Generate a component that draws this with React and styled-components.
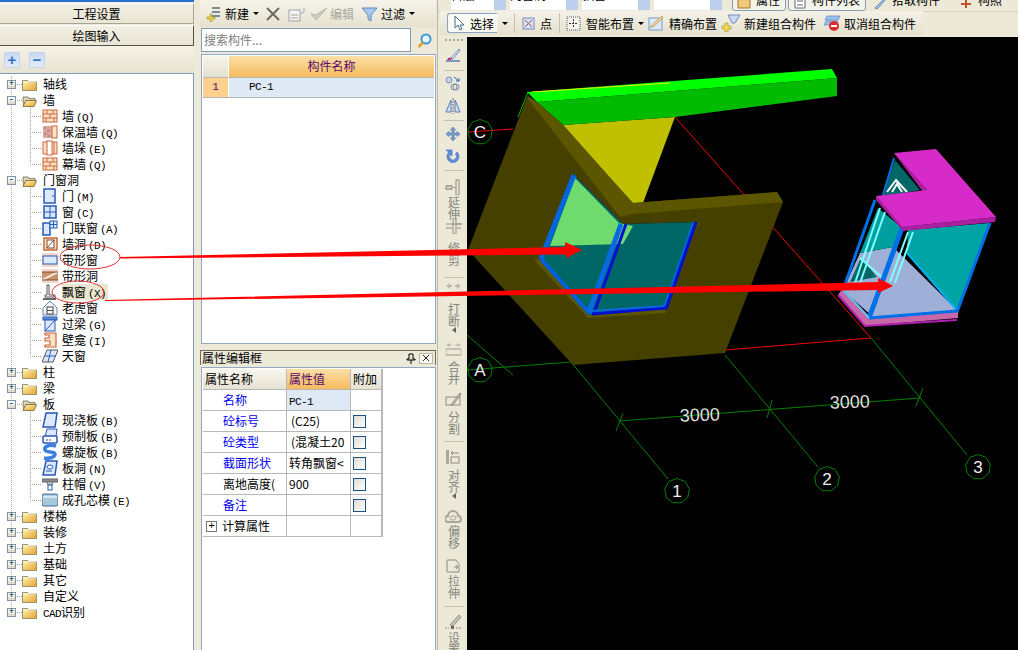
import React from 'react';
import styled, { createGlobalStyle } from 'styled-components';

const CJK = '"Noto Sans CJK SC", "Liberation Sans", sans-serif';
const MONO = '"Liberation Mono", monospace';

const Global = createGlobalStyle`
    html, body { margin: 0; padding: 0; background: #ece9d8; }
    body { font-family: ${CJK}; font-size: 12px; color: #000; }
`;

const Page = styled.div`
    position: relative;
    display: flex;
    width: 1018px;
    height: 650px;
    overflow: hidden;
    background: #ece9d8;
`;

/* ---------- left navigation ---------- */
const LeftPanel = styled.aside`
    width: 194px;
    flex: none;
    display: flex;
    flex-direction: column;
    border-top: 2px solid #2a6fd6;
    box-sizing: border-box;
`;

const NavButton = styled.div`
    height: 21px;
    margin-top: 1px;
    display: flex;
    align-items: center;
    justify-content: center;
    font-size: 12px;
    line-height: 1;
    background: linear-gradient(#f2f0e4, #e9e6d5);
    border-top: 1px solid #fff;
    border-bottom: 1px solid ${p => p.$active ? '#55534a' : '#a8a594'};
    border-right: 1px solid ${p => p.$active ? '#55534a' : '#a8a594'};
    box-sizing: border-box;
`;

const TreeTools = styled.div`
    height: 27px;
    display: flex;
    align-items: center;
    gap: 9px;
    padding-left: 4px;
    background: linear-gradient(#f5f3e8, #e6e3d1);
`;

const SquareTool = styled.span`
    width: 14px;
    height: 14px;
    display: flex;
    align-items: center;
    justify-content: center;
    background: linear-gradient(#c9d8f2, #e4ecfa);
    border: 1px solid #c5d2ea;
    color: #2c74c8;
    font: bold 15px/1 "Liberation Sans", sans-serif;
`;

const TreeBox = styled.div`
    flex: 1;
    background: #fff;
    border-top: 1px solid #7f9db9;
    border-right: 1px solid #7f9db9;
    padding-top: 2px;
`;

const Row = styled.div`
    display: flex;
    align-items: center;
    height: 16px;
`;

const dots = '#a9a294';
const vLine = (h, x) => `repeating-linear-gradient(to bottom, ${dots} 0 1px, transparent 1px 2px) ${x}px 0 / 1px ${h} no-repeat`;
const hLine = x => `repeating-linear-gradient(to right, ${dots} 0 1px, transparent 1px 2px) ${x}px 8px / 100% 1px no-repeat`;

const RootGuide = styled.span`
    width: 22px;
    height: 16px;
    flex: none;
    display: flex;
    align-items: center;
    padding-left: 7px;
    box-sizing: border-box;
    background: ${p => `${vLine(p.$last ? '8px' : '100%', 11)}, ${hLine(11)}`};
`;

const TrunkGuide = styled.span`
    width: 22px;
    height: 16px;
    flex: none;
    background: ${vLine('100%', 11)};
`;

const BranchGuide = styled.span`
    width: 20px;
    height: 16px;
    flex: none;
    background: ${p => `${vLine(p.$last ? '8px' : '100%', 8)}, ${hLine(8)}`};
`;

const Expander = styled.span`
    width: 9px;
    height: 9px;
    flex: none;
    box-sizing: border-box;
    border: 1px solid #7b93ab;
    background: linear-gradient(#fff, #dcd8c8);
    display: flex;
    align-items: center;
    justify-content: center;
    color: #000;
    font: 9px/7px "Liberation Mono", monospace;
`;

const Label = styled.span`
    margin-left: ${p => p.$child ? 4 : 6}px;
    padding-right: 2px;
    height: 16px;
    line-height: 16px;
    white-space: nowrap;
    background: ${p => p.$hot ? '#e9e6cf' : 'transparent'};
`;

const Latin = styled.span`
    font-family: ${MONO};
    font-size: 11px;
    letter-spacing: -0.6px;
    margin-left: ${p => p.$gap || 0}px;
`;

const Glyph = ({ children, w = 16, h = 16 }) => (
    <svg width={w} height={h} viewBox={`0 0 ${w} ${h}`} style={{ flex: 'none', display: 'block' }}>{children}</svg>
);

const Folder = ({ open }) => (
    <Glyph w={15} h={13}>
        <defs>
            <linearGradient id="fold" x1="0" y1="0" x2="1" y2="1">
                <stop offset="0" stopColor="#fff3b8" />
                <stop offset="1" stopColor="#e2a52c" />
            </linearGradient>
        </defs>
        {open ? (
            <>
                <path d="M1 3h5l1 1.500h6v2H4L1.500 12z" fill="#d8d2b8" stroke="#8d8668" />
                <path d="M4 6.500h10.500L12 12.500H1z" fill="url(#fold)" stroke="#8d7a40" />
            </>
        ) : (
            <>
                <path d="M.5 2.500h5l1 1.500h8v8.500H.5z" fill="url(#fold)" stroke="#9b9070" />
                <path d="M1 4h13" stroke="#fff6cc" />
            </>
        )}
    </Glyph>
);

const BLUE = '#2858b8';
const PALE = '#dce8fb';
const ORG = '#c9683c';
const PEACH = '#fbe0c6';

const treeIcons = {
    brick: <><rect x="1" y="2" width="14" height="12" fill={PEACH} stroke={ORG} /><path d="M1 6h14M1 10h14M5 2v4M11 2v4M8 6v4M4 10v4M12 10v4" stroke={ORG} /></>,
    insul: <><rect x="1" y="2" width="9" height="12" fill="#d8a8a0" /><path d="M2 4h2M5 7h3M2 10h3M6 12h2" stroke="#b06a60" /><rect x="10" y="2" width="5" height="12" fill={PEACH} stroke={ORG} /></>,
    pier: <><rect x="1" y="2" width="14" height="12" fill={PEACH} stroke={ORG} /><rect x="5" y="1" width="5" height="14" fill="#fff" stroke={ORG} /><path d="M12 2v12" stroke={ORG} /></>,
    door: <><rect x="2" y="1" width="11" height="14" fill={PALE} stroke={BLUE} strokeWidth="1.500" /><path d="M10 8h2" stroke={BLUE} /></>,
    win: <><rect x="2" y="2" width="12" height="12" fill={PALE} stroke={BLUE} strokeWidth="1.500" /><path d="M8 2v12M2 8h12" stroke={BLUE} /></>,
    doorwin: <><rect x="1" y="3" width="7" height="12" fill={PALE} stroke={BLUE} strokeWidth="1.500" /><rect x="8" y="1" width="7" height="7" fill={PALE} stroke={BLUE} /><path d="M11.500 1v7M8 4.500h7" stroke={BLUE} /></>,
    hole: <><rect x="2" y="2" width="13" height="12" fill={PEACH} stroke={ORG} strokeWidth="1.500" /><rect x="5" y="4" width="7" height="8" fill="#fff" stroke="#7a4a30" /><path d="M5 12l7-8" stroke="#7a4a30" /></>,
    strip: <><rect x="0" y="1" width="16" height="14" fill="#f2d8cc" /><rect x="1" y="4" width="14" height="8" fill={PALE} stroke={BLUE} /></>,
    striphole: <><rect x="0" y="1" width="16" height="14" fill="#f3d7c6" /><path d="M0 4h16v8H0z" fill="#c8946c" /><path d="M0 12L16 4" stroke="#f4e8de" strokeWidth="2" /><path d="M0 4h16M0 12h16" stroke="#7a4a30" /></>,
    bay: <><path d="M5 1h2v10h6v2H3v-2h2z" fill="#fff" stroke="#555" /><path d="M1 15h13" stroke="#333" strokeWidth="1.500" /></>,
    dormer: <><path d="M1 8L8 1l7 7v7H1z" fill="#f0f4fb" stroke="#6888a8" /><rect x="5" y="7" width="6" height="7" fill="#fff" stroke="#444" /><path d="M5 10.500h6" stroke="#444" /></>,
    lintel: <><rect x="1" y="1" width="14" height="3" fill="#5a90e0" stroke={BLUE} /><rect x="3" y="4" width="10" height="11" fill={PALE} stroke={BLUE} /><path d="M3 15L13 4" stroke={BLUE} /></>,
    niche: <><path d="M3 1h11v14H3v-2h5v-4H3V6h4V3H3z" fill={PEACH} stroke={ORG} strokeWidth="1.200" /></>,
    sky: <><path d="M5 2h11l-5 12H0z" fill={PALE} stroke="#555" /><path d="M3 8h11M9 2l-3 12" stroke={BLUE} /></>,
    slab: <><path d="M4 1h11l-2 14H1z" fill={PALE} stroke={BLUE} strokeWidth="1.500" /></>,
    pre: <><path d="M5 1h10l-1 8H3z" fill={PALE} stroke={BLUE} /><rect x="1" y="8" width="14" height="7" rx="1" fill="#fff" stroke={BLUE} strokeWidth="1.500" /><path d="M5 11v2M8 11v2" stroke={BLUE} /></>,
    spiral: <path d="M14 2C6 0 2 3 3 6s10 1 10 4-5 5-11 4" fill="none" stroke="#3a80e0" strokeWidth="3.500" />,
    shole: <><path d="M4 1h11l-2 14H1z" fill={PALE} stroke={BLUE} strokeWidth="1.500" /><ellipse cx="8" cy="7" rx="3" ry="2" fill="#fff" stroke={BLUE} /><path d="M4 11h6" stroke={BLUE} /></>,
    cap: <><rect x="0" y="3" width="16" height="3" fill="#8a8a8a" stroke="#666" /><path d="M5 6h6l-1 3H6z" fill="#ccc" stroke="#777" /><rect x="6" y="9" width="4" height="5" fill="#fff" stroke={BLUE} /></>,
    core: <><rect x="0" y="2" width="16" height="12" rx="2" fill="#a8c8dc" stroke="#406c98" /><path d="M1 5h14" stroke="#e8f2f8" strokeWidth="1.500" /></>,
};

const TREE = [
    { name: '轴线' },
    { name: '墙', items: [['brick', '墙', '(Q)'], ['insul', '保温墙', '(Q)'], ['pier', '墙垛', '(E)'], ['brick', '幕墙', '(Q)']] },
    { name: '门窗洞', items: [['door', '门', '(M)'], ['win', '窗', '(C)'], ['doorwin', '门联窗', '(A)'], ['hole', '墙洞', '(D)'], ['strip', '带形窗'], ['striphole', '带形洞'], ['bay', '飘窗', '(X)', true], ['dormer', '老虎窗'], ['lintel', '过梁', '(G)'], ['niche', '壁龛', '(I)'], ['sky', '天窗']] },
    { name: '柱' },
    { name: '梁' },
    { name: '板', items: [['slab', '现浇板', '(B)'], ['pre', '预制板', '(B)'], ['spiral', '螺旋板', '(B)'], ['shole', '板洞', '(N)'], ['cap', '柱帽', '(V)'], ['core', '成孔芯模', '(E)']] },
    { name: '楼梯' },
    { name: '装修' },
    { name: '土方' },
    { name: '基础' },
    { name: '其它' },
    { name: '自定义' },
    { name: 'CAD识别', cad: true },
];

const Tree = () => (
    <TreeBox>
        {TREE.map((group, g) => (
            <React.Fragment key={group.name}>
                <Row>
                    <RootGuide $last={g === TREE.length - 1}>
                        <Expander>{group.items ? '-' : '+'}</Expander>
                    </RootGuide>
                    <Folder open={!!group.items} />
                    <Label>{group.cad ? <><Latin>CAD</Latin>识别</> : group.name}</Label>
                </Row>
                {(group.items || []).map(([icon, name, key, hot], i) => (
                    <Row key={name + i}>
                        <TrunkGuide />
                        <BranchGuide $last={i === group.items.length - 1} />
                        <Glyph>{treeIcons[icon]}</Glyph>
                        <Label $child $hot={hot}>{name}{key && <Latin $gap={2}>{key}</Latin>}</Label>
                    </Row>
                ))}
            </React.Fragment>
        ))}
    </TreeBox>
);

/* ---------- middle column ---------- */
const MidColumn = styled.section`
    width: 236px;
    margin-left: 6px;
    flex: none;
    display: flex;
    flex-direction: column;
`;

const MidToolbar = styled.div`
    height: 27px;
    display: flex;
    align-items: center;
    padding-left: 5px;
    background: linear-gradient(#f6f4ea, #e5e2d0);
`;

const ToolText = styled.span`
    margin-left: ${p => p.$ml ?? 3}px;
    color: ${p => p.$off ? '#a8a8a0' : '#000'};
    white-space: nowrap;
`;

const Caret = styled.span`
    width: 0;
    height: 0;
    margin-left: ${p => p.$ml ?? 4}px;
    border-left: 3px solid transparent;
    border-right: 3px solid transparent;
    border-top: 3px solid #000;
    flex: none;
`;

const SearchRow = styled.div`
    height: 26px;
    display: flex;
    align-items: center;
    gap: 6px;
    padding-left: 1px;
`;

const SearchInput = styled.div`
    width: 210px;
    height: 24px;
    box-sizing: border-box;
    background: #fff;
    border: 1px solid #7f9db9;
    color: #808080;
    padding-left: 2px;
    line-height: 21px;
`;

const ListBox = styled.div`
    height: 290px;
    margin: 1px 0 0 1px;
    box-sizing: border-box;
    background: #fff;
    border: 1px solid #93a8c2;
    padding: 1px;
`;

const ListHead = styled.div`
    display: grid;
    grid-template-columns: 25px 1fr;
    gap: 1px;
    height: 21px;
    border-bottom: 1px solid #b8b8b8;
`;

const HeadBlank = styled.div`
    background: linear-gradient(#f6f4ec, #e4e0d0);
`;

const HeadCell = styled.div`
    background: linear-gradient(#fcdfa6, #f4bb5e);
    color: #560a6c;
    text-align: center;
    line-height: 20px;
`;

const ListRow = styled.div`
    display: grid;
    grid-template-columns: 25px 1fr;
    gap: 1px;
    height: 19px;
    border-bottom: 1px solid #b8b8b8;
`;

const NumCell = styled.div`
    background: #fdd08e;
    color: #560a6c;
    text-align: center;
    font: 11px/19px ${MONO};
`;

const NameCell = styled.div`
    background: #dfe8f5;
    padding-left: 20px;
    font: 11px/19px ${MONO};
    letter-spacing: -0.6px;
`;

const DockTitle = styled.div`
    height: 15px;
    margin-top: 6px;
    display: flex;
    align-items: center;
    box-sizing: border-box;
    border-top: 1px solid #6c6a5c;
    border-left: 1px solid #6c6a5c;
    border-right: 1px solid #6c6a5c;
    padding-left: 1px;
    line-height: 14px;
`;

const DockTitleText = styled.span`
    flex: 1;
`;

const CloseBox = styled.span`
    width: 14px;
    height: 11px;
    margin: 0 2px 0 3px;
    background: #f8f7f0;
    border: 1px solid #b8b6a8;
    box-sizing: border-box;
    display: flex;
    align-items: center;
    justify-content: center;
`;

const PropBox = styled.div`
    flex: 1;
    margin: 2px 0 0 1px;
    background: #fff;
    border: 1px solid #93a8c2;
    border-bottom: none;
    padding: 1px;
`;

const PropGrid = styled.div`
    display: grid;
    width: 179px;
    grid-template-columns: 83px 63px 30px;
    grid-auto-rows: 20px;
    gap: 1px;
    background: #b8b8b8;
    padding: 0 1px 1px 0;
`;

const PropHead = styled.div`
    background: ${p => p.$val ? 'linear-gradient(#fcdfa6, #f4bb5e)' : 'linear-gradient(#f8f6ee, #e6e2d2)'};
    color: ${p => p.$val ? '#560a6c' : '#000'};
    padding-left: 2px;
    line-height: 20px;
`;

const PropName = styled.div`
    background: #fff;
    color: ${p => p.$plain ? '#000' : '#0000f0'};
    padding-left: 20px;
    line-height: 20px;
    white-space: nowrap;
    overflow: hidden;
`;

const CalcName = styled.div`
    background: #fff;
    display: flex;
    align-items: center;
    gap: 5px;
    padding-left: 3px;
    line-height: 20px;
`;

const PropValue = styled.div`
    background: ${p => p.$sel ? '#dfe8f5' : '#fff'};
    padding-left: ${p => p.$pad ? 4 : 2}px;
    line-height: 20px;
    white-space: nowrap;
    overflow: hidden;
`;

const PropExtra = styled.div`
    background: #fff;
    display: flex;
    align-items: center;
    padding-left: 2px;
`;

const Check = styled.span`
    width: 13px;
    height: 13px;
    box-sizing: border-box;
    border: 1px solid #1c5180;
    background: linear-gradient(135deg, #dedcd2, #fff);
`;

const PlusBox = styled.span`
    width: 11px;
    height: 11px;
    box-sizing: border-box;
    border: 1px solid #777;
    display: flex;
    align-items: center;
    justify-content: center;
    font: 11px/9px ${MONO};
`;

const PROPS = [
    { name: '名称', value: 'PC-1', mono: true, sel: true },
    { name: '砼标号', value: '(C25)', pad: true, check: true },
    { name: '砼类型', value: '(混凝土20', pad: true, check: true },
    { name: '截面形状', value: '转角飘窗<', check: true },
    { name: '离地高度(', value: '900', plain: true, check: true },
    { name: '备注', value: '', check: true },
];

/* ---------- right side ---------- */
const RightSide = styled.section`
    flex: 1;
    min-width: 0;
    display: flex;
    flex-direction: column;
    margin-left: 1px;
    border-left: 1px solid #b8b6a4;
`;

const TopStrip = styled.div`
    height: 11px;
    overflow: hidden;
    display: flex;
    align-items: flex-end;
    padding-left: 13px;
    border-bottom: 1px solid #d4d0bc;
`;

const Combo = styled.div`
    width: ${p => p.$w}px;
    height: 22px;
    flex: none;
    margin-right: 4px;
    margin-bottom: 1px;
    background: #fff;
    display: flex;
    justify-content: space-between;
    line-height: 14px;
`;

const ComboArrow = styled.span`
    width: 12px;
    background: #bcd0ee;
`;

const StripButton = styled.span`
    height: 22px;
    flex: none;
    display: flex;
    gap: 5px;
    margin-left: ${p => p.$ml ?? 2}px;
    padding: 0 5px 0 4px;
    line-height: 20px;
    background: ${p => p.$on ? '#f4f3ea' : 'transparent'};
    border: ${p => p.$on ? '1px solid #8a9ab0' : '1px solid transparent'};
    border-radius: 3px;
    box-sizing: border-box;
`;

const DrawToolbar = styled.div`
    width: 483px;
    height: 24px;
    margin-left: 2px;
    margin-top: -1px;
    display: flex;
    align-items: center;
    padding-left: 7px;
    box-sizing: border-box;
    background: linear-gradient(#f4f2e8, #e4e1ce);
`;

const SelectButton = styled.span`
    width: 50px;
    height: 20px;
    box-sizing: border-box;
    display: flex;
    align-items: center;
    gap: 6px;
    padding-left: 4px;
    background: #fafaf5;
    border: 1px solid #8ba3c0;
    border-right: none;
    border-radius: 3px 0 0 3px;
`;

const Divider = styled.span`
    width: 1px;
    height: 20px;
    background: #c4c1ae;
    margin: 0 ${p => p.$r ?? 6}px 0 ${p => p.$l ?? 6}px;
    flex: none;
`;

const Body = styled.div`
    flex: 1;
    min-height: 0;
    display: flex;
    margin-top: 2px;
`;

const SideBar = styled.div`
    width: 29px;
    flex: none;
    padding-left: 2px;
    box-sizing: border-box;
    display: flex;
    flex-direction: column;
    align-items: center;
    overflow: hidden;
    background: #ece9d8;
`;

const Grip = styled.span`
    width: 18px;
    height: 2px;
    flex: none;
    margin-top: 2px;
    background: repeating-linear-gradient(to right, #a8a698 0 2px, transparent 2px 4px);
`;

const SideSep = styled.span`
    width: 20px;
    height: 1px;
    flex: none;
    margin-top: ${p => p.$mt}px;
    background: #c4c1ae;
`;

const SideIcon = styled.span`
    display: block;
    height: 16px;
    flex: none;
    margin-top: ${p => p.$mt}px;
`;

const SideLabel = styled.span`
    writing-mode: vertical-rl;
    text-orientation: upright;
    height: 24px;
    flex: none;
    margin-top: ${p => p.$mt}px;
    color: #85857a;
    line-height: 14px;
    letter-spacing: 0;
`;

const SideTri = styled.span`
    width: 0;
    height: 0;
    flex: none;
    border-top: 3px solid transparent;
    border-bottom: 3px solid transparent;
    border-right: 4px solid #666;
`;

const Canvas = styled.div`
    flex: 1;
    min-width: 0;
    background: #000;
`;

const Overlay = styled.svg`
    position: absolute;
    left: 0;
    top: 0;
    pointer-events: none;
`;

const G = '#8c8c82';
const side = {
    brush: <><path d="M6 12L14 3l1 1-7 9z" fill="#f0f0f0" stroke="#6a8ac0" /><path d="M2 14c1-3 3-3 5-2l-1 2z" fill="#c03080" /><path d="M1 15h14" stroke="#5a78b0" strokeWidth="1.500" /></>,
    cluster: <><circle cx="4" cy="5" r="3" fill="#c8d4ea" stroke="#7a8aa8" /><circle cx="11" cy="12" r="3" fill="none" stroke="#7a8aa8" /><circle cx="9" cy="12" r="3" fill="none" stroke="#7a8aa8" /><path d="M9 2l5 4M14 3v3h-3" stroke="#2860c0" fill="none" /></>,
    mirror: <><path d="M8 0v16" stroke="#666" strokeDasharray="2 1" /><path d="M6 2v12H1zM10 2v12h5z" fill="#d4e0f4" stroke="#5a78b8" /></>,
    move: <path d="M8 1l2.500 3H9v3h3V5.500L15 8l-3 2.500V9H9v3h1.500L8 15l-2.500-3H7V9H4v1.500L1 8l3-2.500V7h3V4H5.500z" fill="#7aa0d0" stroke="#4a70a8" strokeWidth=".6" />,
    rotate: <path d="M4 4a6 6 0 1 0 8 0l-1.500 2a3.500 3.500 0 1 1-5 0L7 8V2H1z" fill="#5b8ee0" stroke="#3a66b8" strokeWidth=".6" />,
    extend: <><path d="M1 7h6M1 10h6" stroke={G} /><rect x="1" y="7" width="6" height="3" fill="#dcdacc" stroke={G} /><rect x="11" y="1" width="3" height="15" fill="none" stroke={G} /><path d="M8 8.500h2" stroke={G} /></>,
    trim: <><rect x="8" y="0" width="3" height="16" fill="none" stroke={G} /><path d="M1 6h16M1 10h6" stroke={G} /><path d="M12 6h4M12 10h4" stroke={G} /></>,
    cut: <path d="M1 8l4-3v2h2v2H5v2zM16 8l-4-3v2h-2v2h2v2z" fill="#bcbab0" />,
    merge: <><path d="M1 4l4-2v1.500h2v1H5V6zM16 4l-4-2v1.500h-2v1h2V6z" fill="#bcbab0" /><path d="M1 8h15M1 14h15" stroke={G} /><rect x="1" y="8" width="15" height="6" fill="none" stroke="#c4c2b6" /></>,
    split: <><rect x="1" y="6" width="14" height="8" fill="none" stroke={G} /><path d="M6 14L15 2l1 1-8 11z" fill="#cfcdc2" stroke={G} /></>,
    align: <><rect x="1" y="1" width="3" height="14" fill="#aaa89c" /><rect x="6" y="8" width="8" height="6" fill="none" stroke={G} /><path d="M6 4h8M6 4l2-2M6 4l2 2" stroke={G} fill="none" /></>,
    offset: <><path d="M3 14a3 3 0 0 1 0-6 5 5 0 0 1 10 0 3 3 0 0 1 0 6z" fill="none" stroke="#a8a69a" strokeWidth="2" /><ellipse cx="8" cy="10" rx="3" ry="2" fill="none" stroke="#a8a69a" /></>,
    stretch: <><path d="M2 2h9l3 4v8H2z" fill="none" stroke={G} /><path d="M9 9h4M11 7l2 2-2 2" stroke={G} fill="none" /></>,
    setting: <><path d="M5 11L14 1l2 2-8 9z" fill="#c8c6ba" stroke={G} /><path d="M0 14h4M11 14h5" stroke={G} strokeDasharray="2 1" /><rect x="6" y="12" width="3" height="3" fill="#666" /></>,
};

const SideTool = ({ icon, mt, w = 18 }) => (
    <SideIcon $mt={mt}><Glyph w={w} h={16}>{side[icon]}</Glyph></SideIcon>
);

const SideBarTools = () => (
    <SideBar>
        <Grip />
        <SideTool icon="brush" mt={5} />
        <SideSep $mt={8} />
        <SideTool icon="cluster" mt={4} />
        <SideTool icon="mirror" mt={7} />
        <SideSep $mt={6} />
        <SideTool icon="move" mt={5} />
        <SideTool icon="rotate" mt={6} />
        <SideSep $mt={6} />
        <SideTool icon="extend" mt={8} />
        <SideLabel $mt={1}>延伸</SideLabel>
        <SideTool icon="trim" mt={-2} />
        <SideLabel $mt={8}>修剪</SideLabel>
        <SideSep $mt={11} />
        <SideTool icon="cut" mt={0} />
        <SideLabel $mt={9}>打断</SideLabel>
        <SideTri />
        <SideTool icon="merge" mt={8} />
        <SideLabel $mt={4}>合并</SideLabel>
        <SideTool icon="split" mt={6} />
        <SideLabel $mt={4}>分割</SideLabel>
        <SideSep $mt={6} />
        <SideTool icon="align" mt={7} />
        <SideLabel $mt={4}>对齐</SideLabel>
        <SideTri />
        <SideTool icon="offset" mt={9} />
        <SideLabel $mt={1}>偏移</SideLabel>
        <SideTool icon="stretch" mt={9} />
        <SideLabel $mt={1}>拉伸</SideLabel>
        <SideSep $mt={7} />
        <SideTool icon="setting" mt={7} />
        <SideLabel $mt={2}>设置</SideLabel>
    </SideBar>
);

const ring = (cx, cy, r = 12.5, n = 9) =>
    Array.from({ length: n }, (_, i) => {
        const a = (i / n) * Math.PI * 2 - Math.PI / 2;
        return `${(cx + r * Math.cos(a)).toFixed(1)},${(cy + r * Math.sin(a)).toFixed(1)}`;
    }).join(' ');

const AXIS = [
    ['C', 480, 132],
    ['A', 480, 370],
    ['1', 677, 491],
    ['2', 827, 479],
    ['3', 978, 467],
];

const Line = ({ d, c = '#008000', w = 1 }) => <path d={d} stroke={c} strokeWidth={w} fill="none" />;

const Scene = () => (
    <svg width="551" height="613" viewBox="467 37 551 613" style={{ display: 'block' }}>
        {/* axes */}
        <Line d="M468 132L513 129" c="#f00000" />
        <Line d="M675 117L871 338L725 350" c="#f00000" />
        <Line d="M467 370L571 362L668 479" />
        <Line d="M467 335L513 375" />
        <Line d="M725 355L818 467" />
        <Line d="M871 338L967 455" />
        <Line d="M619 421L920 398" />
        <Line d="M623 413L616 431M772 400L767 418M923 388L916 406" />
        <Line d="M528 92L518 117" c="#00c000" />
        {AXIS.map(([t, x, y]) => (
            <g key={t}>
                <polygon points={ring(x, y)} fill="none" stroke="#008000" />
                <text x={x} y={y + 6} textAnchor="middle" fontFamily="Liberation Sans" fontSize="17" fill="#eee">{t}</text>
            </g>
        ))}
        <text x="700" y="421" textAnchor="middle" fontFamily="Liberation Sans" fontSize="18" fill="#ddd" transform="rotate(-2 700 421)">3000</text>
        <text x="850" y="408" textAnchor="middle" fontFamily="Liberation Sans" fontSize="18" fill="#ddd" transform="rotate(-2 850 408)">3000</text>

        {/* bay window seen in the wall */}
        <polygon points="563,125 675,117 643,203 632,203" fill="#c0bf00" />
        <polygon points="527,92 832,69 837,78 537,102" fill="#00ff00" />
        <polygon points="537,102 837,78 837,96 675,117 563,125" fill="#00bb00" />
        <Line d="M532 92L670 83" c="#e8e800" />
        <path fillRule="evenodd" d="M527 97L468 250L573 365L725 353L783 202L777 192L633 203ZM574 175L541 259L590 315L665 309L696 222L623 224Z" fill="#454000" />
        <polygon points="528,96 537,102 563,125 633,203 620,217 527,98" fill="#5c5600" />
        <polygon points="633,203 777,192 783,202 632,214 620,217" fill="#5c5600" />
        <polygon points="534,260 588,318 666,313 664,308 590,315 539,259" fill="#5c5600" />
        <polygon points="574,175 541,259 590,315 665,309 696,222 623,224" fill="#006666" />
        <polygon points="575,178 619,223 633,226 623,244 550,246" fill="#6fdb6f" />
        <Line d="M574 175L541 259" c="#0066e0" w={5} />
        <Line d="M541 259L590 314" c="#0060e0" w={4} />
        <Line d="M626 224L594 313" c="#0010d0" w={3} />
        <Line d="M621 224L589 312" c="#0a6ae0" w={5} />
        <Line d="M693 223L664 308" c="#0066e0" w={2} />
        <Line d="M696 222L666 309" c="#0010d0" w={3} />
        <Line d="M592 314L665 308" c="#0010d0" w={3} />
        <Line d="M592 311L664 306" c="#0a6ae0" w={2} />

        {/* bay window on its own */}
        <polygon points="843,288 869,316 958,309 958,318 865,326 838,295" fill="#c868a8" />
        <Line d="M838 295L865 326L957 320" c="#b020b0" w={2} />
        <polygon points="895,160 920,190 882,197" fill="#006666" />
        <Line d="M894 158L882 198" c="#0070e8" w={2} />
        <Line d="M887 192L896 180L907 192M892 192L897 184L902 192" c="#ffffff" w={2} />
        <polygon points="843,290 860,253 893,247 957,310 873,317" fill="#9fb0d8" />
        <polygon points="908,230 990,223 957,310 907,253" fill="#00a4a4" />
        <polygon points="878,208 902,228 893,247 860,253" fill="#00a0a0" />
        <polygon points="860,260 850,282 877,277 863,260" fill="#006666" />
        <Line d="M907 253L957 310" c="#00b0f0" w={2} />
        <Line d="M880 208L855 283M885 212L860 283M908 232L890 282M913 232L895 283M860 258L885 280" c="#80ffff" w={2} />
        <Line d="M875 200L843 290" c="#0070e8" w={3} />
        <Line d="M902 228L869 318" c="#0070e8" w={5} />
        <Line d="M990 223L957 312" c="#0070e8" w={3} />
        <Line d="M869 318L957 311" c="#0070e8" w={3} />
        <Line d="M843 290L869 318" c="#60c0f0" w={2} />
        <Line d="M902 228L990 221" c="#0070e8" w={2} />
        <polygon points="876,196 902,227 996,217 995,222 903,231 876,200" fill="#a820a0" />
        <polygon points="894,153 923,192 927,190 894,153" fill="#a820a0" />
        <polygon points="894,153 936,149 996,217 902,227 876,196 927,190" fill="#d62bc8" />
    </svg>
);

const Check2 = () => (
    <Glyph w={18} h={16}><path d="M1 8l5 6L17 2 6 9z" fill="#cfcfc6" stroke="#b4b4aa" /></Glyph>
);

const App = () => (
    <Page>
        <Global />
        <LeftPanel>
            <NavButton>工程设置</NavButton>
            <NavButton $active>绘图输入</NavButton>
            <TreeTools>
                <SquareTool>+</SquareTool>
                <SquareTool>−</SquareTool>
            </TreeTools>
            <Tree />
        </LeftPanel>

        <MidColumn>
            <MidToolbar>
                <Glyph w={16} h={16}><path d="M7 2h8M7 6h8M7 10h8" stroke="#5a6a80" strokeWidth="1.500" /><path d="M2 11h3V8h2v3h3v2H7v3H5v-3H2z" fill="#f4d048" stroke="#a08a30" strokeWidth=".6" /></Glyph>
                <ToolText $ml={4}>新建</ToolText>
                <Caret $ml={4} />
                <Glyph w={22} h={16}><path d="M8 2l12 12M20 2L8 14" stroke="#6a6a66" strokeWidth="2" /></Glyph>
                <Glyph w={29} h={16}><rect x="8" y="4" width="11" height="11" fill="#f4f4f0" stroke="#a0a0a0" /><path d="M10 9h7M10 12h7" stroke="#a0a0a0" /><path d="M23 2v4l-3 2" stroke="#88a8d8" fill="none" /></Glyph>
                <Check2 />
                <ToolText $off $ml={2}>编辑</ToolText>
                <Glyph w={24} h={16}><path d="M8 2h15l-6 7v6l-3-2V9z" fill="#a8c8f0" stroke="#5a88c0" /></Glyph>
                <ToolText $ml={3}>过滤</ToolText>
                <Caret $ml={4} />
            </MidToolbar>
            <SearchRow>
                <SearchInput>搜索构件...</SearchInput>
                <Glyph w={15} h={15}><circle cx="9" cy="6" r="4.500" fill="#e8f4fc" stroke="#3a9ad8" strokeWidth="2" /><path d="M6 9.500L1.500 14" stroke="#e0a030" strokeWidth="2.500" /></Glyph>
            </SearchRow>
            <ListBox>
                <ListHead>
                    <HeadBlank />
                    <HeadCell>构件名称</HeadCell>
                </ListHead>
                <ListRow>
                    <NumCell>1</NumCell>
                    <NameCell>PC-1</NameCell>
                </ListRow>
            </ListBox>
            <DockTitle>
                <DockTitleText>属性编辑框</DockTitleText>
                <Glyph w={10} h={11}><path d="M3 1h4v5h2v1H1V6h2zM5 7v4" stroke="#000" fill="none" /></Glyph>
                <CloseBox><Glyph w={8} h={8}><path d="M1 1l6 6M7 1L1 7" stroke="#222" /></Glyph></CloseBox>
            </DockTitle>
            <PropBox>
                <PropGrid>
                    <PropHead>属性名称</PropHead>
                    <PropHead $val>属性值</PropHead>
                    <PropHead>附加</PropHead>
                    {PROPS.map(p => (
                        <React.Fragment key={p.name}>
                            <PropName $plain={p.plain}>{p.name}</PropName>
                            <PropValue $sel={p.sel} $pad={p.pad}>{p.mono ? <Latin>{p.value}</Latin> : p.value}</PropValue>
                            <PropExtra>{p.check && <Check />}</PropExtra>
                        </React.Fragment>
                    ))}
                    <CalcName><PlusBox>+</PlusBox>计算属性</CalcName>
                    <PropValue />
                    <PropExtra />
                </PropGrid>
            </PropBox>
        </MidColumn>

        <RightSide>
            <TopStrip>
                <Combo $w={55}>首层<ComboArrow /></Combo>
                <Combo $w={68}>门窗洞<ComboArrow /></Combo>
                <Combo $w={68}>飘窗<ComboArrow /></Combo>
                <Combo $w={68}><span />PC-1<ComboArrow /></Combo>
                <StripButton $on $ml={6}><Glyph w={14} h={20}><path d="M1 10l6-4 6 4v8H1z" fill="#f0c878" stroke="#a07830" /></Glyph>属性</StripButton>
                <StripButton $on><Glyph w={14} h={20}><path d="M2 6h10v12H2z" fill="#fff" stroke="#667" /><path d="M4 11h6M4 15h6" stroke="#667" /></Glyph>构件列表</StripButton>
                <StripButton><Glyph w={14} h={20}><path d="M2 18L12 8l1 1-9 10z" fill="#a8c8f0" stroke="#5a88c0" /></Glyph>拾取构件</StripButton>
                <StripButton $ml={8}><Glyph w={14} h={20}><path d="M2 14h10M7 8v10" stroke="#c05030" strokeWidth="2" /></Glyph>构照</StripButton>
            </TopStrip>
            <DrawToolbar>
                <SelectButton>
                    <Glyph w={12} h={16}><path d="M3 1v12l3-3 2 5 2-1-2-4h4z" fill="#fff" stroke="#4a6a90" /></Glyph>
                    选择
                </SelectButton>
                <Caret $ml={5} />
                <Divider $l={6} $r={7} />
                <Glyph w={13} h={13}><rect x="1" y="1" width="11" height="11" fill="#d8e0f4" stroke="#7a8ac0" /><path d="M3 3l7 7M10 3l-7 7" stroke="#b04848" /></Glyph>
                <ToolText $ml={5}>点</ToolText>
                <Divider $l={7} $r={6} />
                <Glyph w={15} h={15}><rect x="1" y="1" width="13" height="13" fill="#f4f4ec" stroke="#556" strokeDasharray="1 1" /><path d="M7.500 3v9M3 7.500h9" stroke="#334" strokeDasharray="2 1" /></Glyph>
                <ToolText $ml={5}>智能布置</ToolText>
                <Caret $ml={4} />
                <Glyph w={20} h={16}><rect x="5" y="3" width="13" height="12" fill="#dce8fb" stroke="#7a9ac8" /><path d="M6 12L18 1l1 2-10 9z" fill="#f0d8a0" stroke="#c0a060" /></Glyph>
                <ToolText $ml={5}>精确布置</ToolText>
                <Glyph w={24} h={18}><path d="M11 1h12l-5 8h-3z" fill="#c8d8f4" stroke="#7a8ac0" /><path d="M8 9v3H5v3h3v3h3v-3h3v-3h-3V9z" fill="#f4d858" stroke="#a08a30" strokeWidth=".6" /></Glyph>
                <ToolText $ml={3}>新建组合构件</ToolText>
                <Glyph w={25} h={18}><path d="M11 2h13l-2 4H9zM10 7h12l-2 4H8z" fill="#9cc0ec" stroke="#5a88c0" strokeWidth=".7" /><circle cx="18" cy="12" r="5" fill="#d83030" /><path d="M15 12h6" stroke="#fff" strokeWidth="2" /></Glyph>
                <ToolText $ml={3}>取消组合构件</ToolText>
            </DrawToolbar>
            <Body>
                <SideBarTools />
                <Canvas><Scene /></Canvas>
            </Body>
        </RightSide>

        <Overlay width="1018" height="650" viewBox="0 0 1018 650">
            <ellipse cx="90" cy="257" rx="30" ry="12" fill="none" stroke="#e03030" />
            <ellipse cx="78" cy="292" rx="26" ry="11" fill="none" stroke="#e03030" />
            <polygon points="120,257 120,258.500 566,254.500 566,258 582,250 565,242 565,247" fill="#ff0000" />
            <polygon points="105,300 105,301 878,290 878,293 893,286 878,278 878,282" fill="#ff0000" />
        </Overlay>
    </Page>
);

export default App;
